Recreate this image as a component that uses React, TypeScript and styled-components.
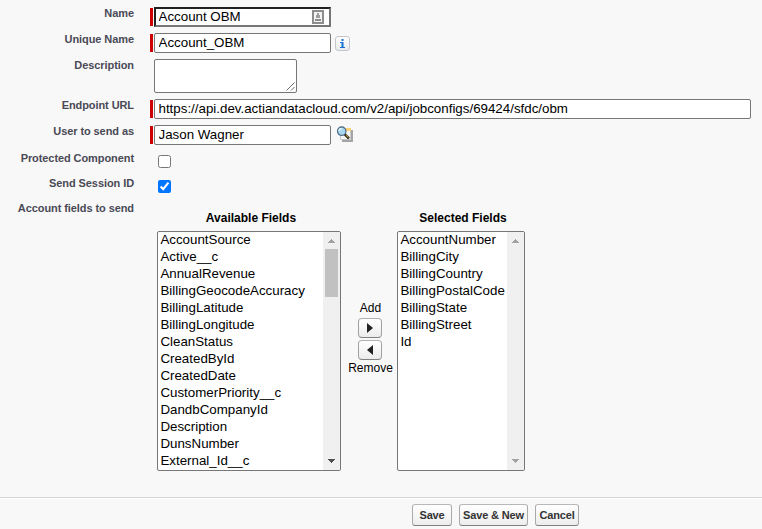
import React from 'react';
import styled, { createGlobalStyle } from 'styled-components';

const GlobalStyle = createGlobalStyle`
  *, *::before, *::after { box-sizing: border-box; }
  body {
    margin: 0;
    background: #f8f8f8;
    font-family: "Liberation Sans", Arial, sans-serif;
    color: #000;
    overflow: hidden;
  }
`;

const Page = styled.main`
  width: 762px;
  height: 529px;
  padding-top: 7px;
  display: flex;
  flex-direction: column;
`;

const Row = styled.div<{ $height: number }>`
  display: flex;
  align-items: flex-start;
  height: ${(p) => p.$height}px;
`;

const Label = styled.label<{ $drop?: boolean }>`
  width: 134px;
  margin: ${(p) => (p.$drop ? 0 : -1)}px 16px 0 0;
  text-align: right;
  font-size: 11px;
  font-weight: bold;
  line-height: 14px;
  white-space: nowrap;
  color: #4a4a56;
  letter-spacing: -0.08px;
`;

const Required = styled.span<{ $on?: boolean }>`
  width: 3px;
  height: 18px;
  margin: 1px 1px 0 0;
  background: ${(p) => (p.$on ? '#c00' : 'transparent')};
`;

const TextInput = styled.input<{ $width: number; $inset?: boolean }>`
  width: ${(p) => p.$width}px;
  height: 20px;
  margin: 0;
  padding: ${(p) => (p.$inset ? '0 2.5px 1px' : '0 3.5px 1px')};
  border: ${(p) => (p.$inset ? '2px inset #767676' : '1px solid #767676')};
  border-radius: ${(p) => (p.$inset ? 0 : 2)}px;
  background: #fff;
  color: #000;
  font: 13.333px "Liberation Sans", Arial, sans-serif;
  outline: none;
`;

const InputWrap = styled.div`
  position: relative;
  height: 20px;
  display: flex;
`;

const CardIcon = styled.svg`
  position: absolute;
  right: 7px;
  top: 3px;
`;

const DescriptionBox = styled.textarea`
  width: 143px;
  height: 34px;
  margin: 0;
  border: 1px solid #767676;
  border-radius: 2px;
  background: #fff;
  outline: none;
  overflow: hidden;
  resize: none;
`;

const Grip = styled.svg`
  position: absolute;
  left: 132px;
  top: 23px;
`;

const InfoBadge = styled.span`
  width: 15px;
  height: 15px;
  margin: 3px 0 0 4px;
  border: 1px solid #c3c6cb;
  border-radius: 3px;
  background: linear-gradient(#fff, #e9ebee);
  display: flex;
  justify-content: center;
  align-items: center;
`;

const LookupIcon = styled.svg`
  margin: 1px 0 0 5px;
`;

const Check = styled.input`
  width: 13px;
  height: 13px;
  margin: 4px 0 0 4px;
`;

const Picker = styled.div`
  display: flex;
  padding-left: 3px;
`;

const Column = styled.div<{ $width: number }>`
  width: ${(p) => p.$width}px;
`;

const Heading = styled.div`
  height: 30px;
  padding: 10px 0 0 4px;
  font-size: 12px;
  font-weight: bold;
  line-height: 14px;
  text-align: center;
`;

const ListBox = styled.div`
  height: 240px;
  display: flex;
  justify-content: space-between;
  border: 1px solid #767676;
  border-radius: 2px;
  background: #fff;
  overflow: hidden;
`;

const Options = styled.ul`
  list-style: none;
  margin: 0;
  padding: 0 0 0 2.4px;
  font-size: 13.333px;
`;

const Option = styled.li`
  height: 17px;
  line-height: 16px;
  white-space: nowrap;
`;

const Scrollbar = styled.div`
  width: 17px;
  flex: none;
  display: flex;
  flex-direction: column;
  align-items: center;
  background: #f0f0f0;
`;

const Thumb = styled.div`
  width: 13px;
  height: 48px;
  background: #c1c1c1;
`;

const BarSpace = styled.div`
  flex: 1;
`;

const Transfer = styled.div`
  width: 56px;
  padding: 70px 0 0 3px;
  margin-top: 30px;
  display: flex;
  flex-direction: column;
  align-items: center;
  font-size: 12px;
  line-height: 14px;
`;

const MoveButton = styled.button`
  width: 24px;
  height: 20px;
  margin: 0 1px 2px 0;
  padding: 0;
  display: flex;
  align-items: center;
  justify-content: center;
  border: 1px solid;
  border-color: #b0b0b0 #a0a0a0 #808080;
  border-radius: 4px;
  background: linear-gradient(#fff, #ececec);
`;

const AddCaption = styled.div`
  height: 17px;
`;

const RemoveCaption = styled.div`
  margin-top: -1px;
`;

const Footer = styled.footer`
  margin-top: 26px;
  height: 32px;
  padding: 6px 0 0 412px;
  display: flex;
  align-items: flex-start;
  gap: 7px;
  border-top: 1px solid #d4d4d4;
  box-shadow: inset 0 1px #fff;
`;

const ActionButton = styled.button<{ $width: number }>`
  width: ${(p) => p.$width}px;
  height: 22px;
  padding: 0;
  border: 1px solid;
  border-color: #b8b8b8 #aaa #7f7f7f;
  border-radius: 3px;
  background: linear-gradient(#fff, #ededed);
  color: #333;
  font: bold 11px "Liberation Sans", Arial, sans-serif;
  letter-spacing: -0.15px;
  white-space: nowrap;
`;

const AVAILABLE = [
  'AccountSource', 'Active__c', 'AnnualRevenue', 'BillingGeocodeAccuracy', 'BillingLatitude',
  'BillingLongitude', 'CleanStatus', 'CreatedById', 'CreatedDate', 'CustomerPriority__c',
  'DandbCompanyId', 'Description', 'DunsNumber', 'External_Id__c',
];

const SELECTED = [
  'AccountNumber', 'BillingCity', 'BillingCountry', 'BillingPostalCode', 'BillingState',
  'BillingStreet', 'Id',
];

function Arrow({ down, active }: { down?: boolean; active?: boolean }) {
  return (
    <svg width="17" height="17" viewBox="0 0 17 17" shapeRendering="crispEdges">
      <path
        d={down ? 'M5 6h7v1h-1v1h-1v1H9v1H8V9H7V8H6V7H5z' : 'M8 7h1v1h1v1h1v1h1v1H5v-1h1V9h1V8h1z'}
        fill={active ? '#505050' : '#a3a3a3'}
      />
    </svg>
  );
}

function FieldList({ items, scrollable }: { items: string[]; scrollable?: boolean }) {
  return (
    <ListBox>
      <Options>
        {items.map((item) => <Option key={item}>{item}</Option>)}
      </Options>
      <Scrollbar>
        <Arrow />
        {scrollable && <Thumb />}
        <BarSpace />
        <Arrow down active={scrollable} />
      </Scrollbar>
    </ListBox>
  );
}

export default function App() {
  return (
    <>
      <GlobalStyle />
      <Page>
        <Row $height={26}>
          <Label>Name</Label>
          <Required $on />
          <InputWrap>
            <TextInput $width={177} $inset defaultValue="Account OBM" />
            <CardIcon width="12" height="14" viewBox="0 0 12 14">
              <rect x="1" y="1" width="10" height="12" fill="#f4f4f4" stroke="#8d8d8d" strokeWidth="2" />
              <path d="M5 3h2v2h1v3H4V5h1z" fill="#a0a0a0" />
              <path d="M3 10h6" stroke="#8d8d8d" strokeWidth="2" />
            </CardIcon>
          </InputWrap>
        </Row>
        <Row $height={26}>
          <Label>Unique Name</Label>
          <Required $on />
          <TextInput $width={177} defaultValue="Account_OBM" />
          <InfoBadge>
            <svg width="5" height="9" viewBox="0 0 5 9" fill="#1270d0">
              <path d="M1.5 0h2v2h-2zM0 3h3.5v5H5v1H0V8h1.5V4H0z" />
            </svg>
          </InfoBadge>
        </Row>
        <Row $height={40}>
          <Label>Description</Label>
          <Required />
          <InputWrap>
            <DescriptionBox />
            <Grip width="9" height="9" viewBox="0 0 9 9">
              <path d="M.5 8.5l8-8M5 8.5l3.5-3.5" stroke="#707070" fill="none" />
            </Grip>
          </InputWrap>
        </Row>
        <Row $height={26}>
          <Label>Endpoint URL</Label>
          <Required $on />
          <TextInput
            $width={597}
            defaultValue="https://api.dev.actiandatacloud.com/v2/api/jobconfigs/69424/sfdc/obm"
          />
        </Row>
        <Row $height={26}>
          <Label>User to send as</Label>
          <Required $on />
          <TextInput $width={177} defaultValue="Jason Wagner" />
          <LookupIcon width="18" height="18" viewBox="0 0 18 18">
            <path d="M6 15h10V4" fill="none" stroke="#a5a5a5" strokeWidth="2" />
            <path d="M4.5 2.5h10v11h-10z" fill="#f5f5f5" stroke="#c8c8c8" />
            <path d="M9 2h6v3H9z" fill="#ffd27a" />
            <circle cx="5.7" cy="5.2" r="4.2" fill="#a9d7f2" stroke="#537187" strokeWidth="1.3" />
            <path d="M3 5Q3.3 2.5 5.7 2.5" stroke="#e8f8ff" strokeWidth="1.4" fill="none" />
            <path d="M8.8 8.3l4.2 4.2" stroke="#302a20" strokeWidth="2.5" />
            <path d="M10 9.2l2.2 2.2" stroke="#e1b441" strokeWidth="1" />
          </LookupIcon>
        </Row>
        <Row $height={25}>
          <Label $drop>Protected Component</Label>
          <Required />
          <Check type="checkbox" />
        </Row>
        <Row $height={25}>
          <Label $drop>Send Session ID</Label>
          <Required />
          <Check type="checkbox" defaultChecked />
        </Row>
        <Row $height={270}>
          <Label $drop>Account fields to send</Label>
          <Required />
          <Picker>
            <Column $width={184}>
              <Heading>Available Fields</Heading>
              <FieldList items={AVAILABLE} scrollable />
            </Column>
            <Transfer>
              <AddCaption>Add</AddCaption>
              <MoveButton aria-label="Add">
                <svg width="6" height="10" viewBox="0 0 6 10"><path d="M0 0l6 5-6 5z" fill="#222" /></svg>
              </MoveButton>
              <MoveButton aria-label="Remove">
                <svg width="6" height="10" viewBox="0 0 6 10"><path d="M6 0L0 5l6 5z" fill="#222" /></svg>
              </MoveButton>
              <RemoveCaption>Remove</RemoveCaption>
            </Transfer>
            <Column $width={128}>
              <Heading>Selected Fields</Heading>
              <FieldList items={SELECTED} />
            </Column>
          </Picker>
        </Row>
        <Footer>
          <ActionButton $width={40}>Save</ActionButton>
          <ActionButton $width={69}>Save &amp; New</ActionButton>
          <ActionButton $width={44}>Cancel</ActionButton>
        </Footer>
      </Page>
    </>
  );
}
